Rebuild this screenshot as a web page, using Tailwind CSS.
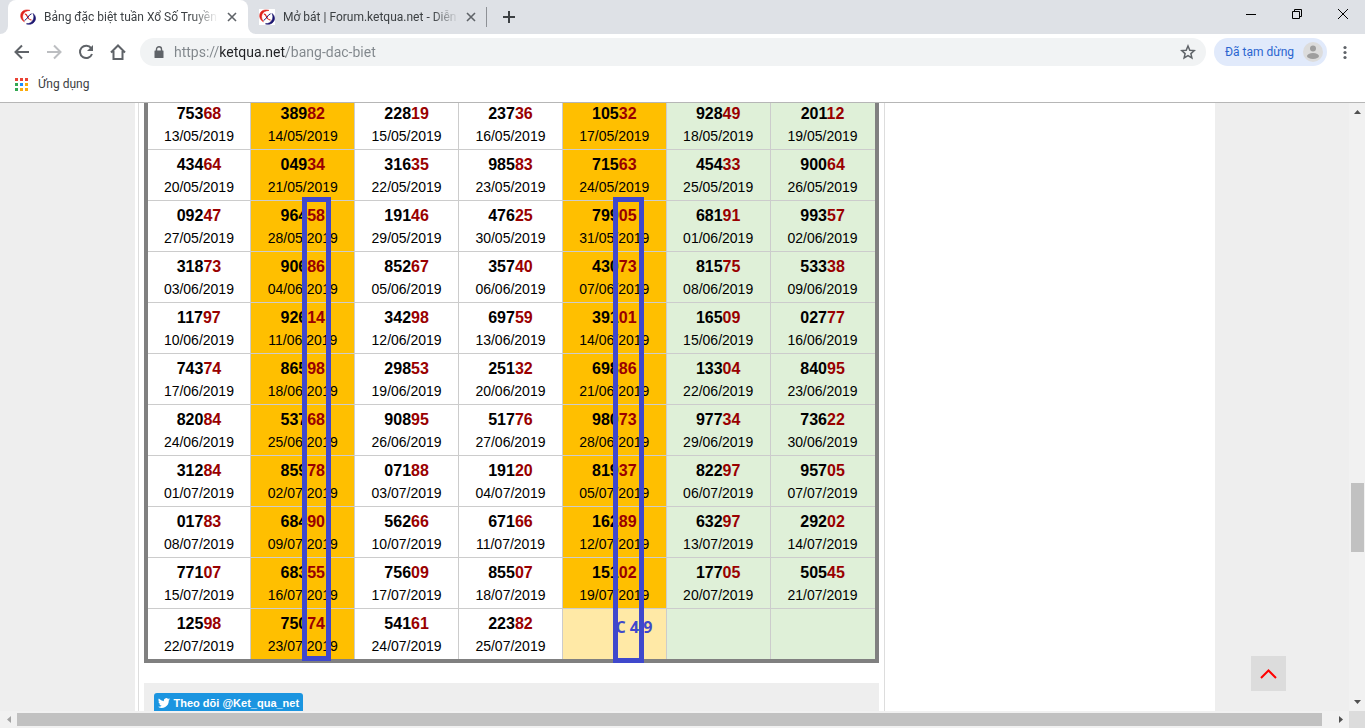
<!DOCTYPE html>
<html lang="vi">
<head>
<meta charset="utf-8">
<meta name="viewport" content="width=device-width, initial-scale=1">
<title>Bảng đặc biệt tuần Xổ Số Truyền Thống</title>
<script src="https://cdn.jsdelivr.net/npm/@tailwindcss/browser@4"></script>
</head>
<body class="flex h-screen flex-col overflow-hidden bg-white font-[Roboto,'Noto_Sans',sans-serif] text-xs text-[#3c4043]">
<svg class="hidden">
  <symbol id="logo" viewBox="0 0 16 16">
    <path d="M10 1.400C6 .2 1.600 1.400.8 5.400C.2 8.600 1.600 11 4.400 12.800C2.800 10.400 2 8 3 5.400C4 2.800 6.800 1.600 10 1.400Z" fill="#e0231c" stroke="#e0231c" stroke-width=".6"/>
    <path d="M13 4.400C16 7 16.400 10.400 14 13.200C12 15.400 9 15.800 6.400 14.800C9.600 14.800 12 13.400 13.200 10.800C14.200 8.600 14 6.400 13 4.400Z" fill="#1c1670" stroke="#1c1670" stroke-width=".6"/>
    <path d="M4.800 5.200Q6.200 4.600 7.400 7.600T11.400 11.200" fill="none" stroke="#e0231c" stroke-width="1.200"/>
    <path d="M11.600 4.800Q9.700 5.200 8 8T4.500 11.400" fill="none" stroke="#1c1670" stroke-width="1"/>
  </symbol>
  <symbol id="close" viewBox="0 0 10 10"><path d="M1 1l8 8M9 1l-8 8" fill="none" stroke="#5f6368" stroke-width="1.600"/></symbol>
</svg>

<header class="shrink-0 border-b border-[#b6b6b6]">
  <div class="flex h-[34px] bg-[#dee1e6]">
    <div class="flex w-2 items-end bg-white"><span class="h-full w-full rounded-br-lg bg-[#dee1e6]"></span></div>
    <div class="flex w-60 items-center rounded-t-lg bg-white pr-2 pl-3">
      <svg class="size-4 shrink-0"><use href="#logo"/></svg>
      <span class="ml-2 w-[174px] whitespace-nowrap [mask-image:linear-gradient(to_right,#000_85%,transparent)]">Bảng đặc biệt tuần Xổ Số Truyền</span>
      <button aria-label="Đóng thẻ" class="ml-1.5 flex size-4 items-center justify-center"><svg class="size-2.5"><use href="#close"/></svg></button>
    </div>
    <div class="flex w-[238px] bg-white">
      <div class="flex flex-1 items-center rounded-bl-lg bg-[#dee1e6] pl-[11px]">
        <span class="size-4 shrink-0 bg-white"><svg class="size-4"><use href="#logo"/></svg></span>
        <span class="ml-2 w-[176px] whitespace-nowrap [mask-image:linear-gradient(to_right,#000_85%,transparent)]">Mở bát | Forum.ketqua.net - Diễn</span>
        <button aria-label="Đóng thẻ" class="ml-1 flex size-4 items-center justify-center"><svg class="size-2.5"><use href="#close"/></svg></button>
      </div>
    </div>
    <div class="my-[7px] w-px self-stretch bg-[#8e9196]"></div>
    <button aria-label="Thẻ mới" class="ml-4 flex items-center"><svg class="size-3" viewBox="0 0 12 12"><path d="M6 0v12M0 6h12" stroke="#3c4043" stroke-width="2"/></svg></button>
    <div class="ml-auto flex text-black">
      <button aria-label="Thu nhỏ" class="flex h-7 w-[46px] items-center justify-center"><svg class="size-[10px]" viewBox="0 0 10 10"><path d="M0 5.500h10" stroke="currentColor"/></svg></button>
      <button aria-label="Khôi phục" class="flex h-7 w-[46px] items-center justify-center"><svg class="size-[10px]" viewBox="0 0 10 10" fill="none" stroke="currentColor"><path d="M.5 2.500h7v7h-7zM2.500 2.500v-2h7v7h-2"/></svg></button>
      <button aria-label="Đóng" class="flex h-7 w-[45px] items-center justify-center"><svg class="size-[10px]" viewBox="0 0 10 10"><path d="M0 0l10 10M10 0L0 10" stroke="currentColor"/></svg></button>
    </div>
  </div>
  <div class="flex h-9 items-center text-[#5f6368]">
    <div class="flex w-[140px] items-center gap-4 pl-3.5">
      <button aria-label="Quay lại"><svg class="size-4" viewBox="0 0 16 16" fill="none" stroke="currentColor" stroke-width="2"><path d="M15 8H2M8 1.500L1.500 8L8 14.500"/></svg></button>
      <button aria-label="Tiến" class="text-[#bcbec1]"><svg class="size-4" viewBox="0 0 16 16" fill="none" stroke="currentColor" stroke-width="2"><path d="M1 8h13M8 1.500L14.500 8L8 14.500"/></svg></button>
      <button aria-label="Tải lại"><svg class="size-4" viewBox="0 0 16 16"><path d="M13.200 4.200A6.200 6.200 0 1 0 14 10" fill="none" stroke="currentColor" stroke-width="2"/><path d="M15 1v6H9z" fill="currentColor"/></svg></button>
      <button aria-label="Trang chủ"><svg class="size-4" viewBox="0 0 16 16" fill="none" stroke="currentColor" stroke-width="2"><path d="M1 8.500L8 1.500L15 8.500M3.500 7v8h9V7"/></svg></button>
    </div>
    <div class="flex h-7 flex-1 items-center rounded-full bg-[#f1f3f4] pr-2.5 pl-3.5">
      <svg class="h-3 w-2.5" viewBox="0 0 10 12"><path d="M1 4.500h8q.5 0 .5.500v6.500q0 .5-.5.500H1q-.5 0-.5-.5V5q0-.5.500-.5z" fill="currentColor"/><path d="M2.500 5V3.200a2.500 2.500 0 0 1 5 0V5" fill="none" stroke="currentColor" stroke-width="1.400"/></svg>
      <input aria-label="Địa chỉ" value="https://ketqua.net/bang-dac-biet" class="ml-2.5 flex-1 bg-[linear-gradient(to_right,#80868b_46px,#202124_46px,#202124_112px,#80868b_112px)] bg-clip-text text-sm text-transparent outline-none">
      <button aria-label="Đánh dấu trang"><svg class="size-4" viewBox="0 0 16 16"><path d="M8 2l1.800 4.200 4.500.4-3.400 3 1 4.400L8 11.700 4.100 14l1-4.400-3.400-3 4.500-.4z" fill="none" stroke="currentColor" stroke-width="1.500"/></svg></button>
    </div>
    <button class="ml-2 flex h-7 items-center rounded-full bg-[#e1eafb] pr-1 pl-[11px] text-[#2a65d0]">
      <span class="w-[78px] text-left whitespace-nowrap">Đã tạm dừng</span>
      <svg class="size-5" viewBox="0 0 20 20"><circle cx="10" cy="10" r="10" fill="#dcdcdc"/><circle cx="10" cy="6.500" r="3" fill="#9e9e9e"/><ellipse cx="10" cy="14" rx="6" ry="3" fill="#9e9e9e"/></svg>
    </button>
    <button aria-label="Trình đơn" class="mr-4 ml-3.5"><svg class="h-4 w-2" viewBox="0 0 8 16" fill="currentColor"><circle cx="4" cy="3.500" r="1.600"/><circle cx="4" cy="8.500" r="1.600"/><circle cx="4" cy="13.500" r="1.600"/></svg></button>
  </div>
  <nav class="flex h-8 items-center pb-1 pl-[15px]">
    <a href="#" class="flex items-center">
      <svg class="size-[13px]" viewBox="0 0 13 13"><path d="M0 0h3v3H0zM5 0h3v3H5zM10 0h3v3h-3z" fill="#ea4335"/><path d="M0 5h3v3H0zM0 10h3v3H0z" fill="#34a853"/><path d="M5 5h3v3H5z" fill="#1a8cff"/><path d="M10 5h3v3h-3zM5 10h3v3H5zM10 10h3v3h-3z" fill="#fbab0c"/></svg>
      <span class="ml-2.5">Ứng dụng</span>
    </a>
  </nav>
</header>

<div class="flex min-h-0 flex-1">
  <main class="relative min-w-0 flex-1 overflow-hidden bg-[#eee] font-['Liberation_Sans',Arial,sans-serif] text-black">
    <div class="mx-auto min-h-full w-full max-w-[1080px] bg-white pl-[3px]">
      <section class="max-w-[747px] border-x border-[#ddd] px-[5px]">
        <div class="relative -mt-1">
          <table class="w-full table-fixed border-separate border-spacing-0 border-x-4 border-b-4 border-[#808080] text-center">
            <tbody id="results"></tbody>
          </table>
          <div class="absolute top-[98px] left-[158px] h-[464px] w-[29px] border-5 border-[#3f48cc]"></div>
          <div class="absolute top-[98px] left-[469px] h-[466px] w-[31px] border-5 border-[#3f48cc]"></div>
          <p class="absolute top-[516px] left-[472px] font-['Open_Sans','Noto_Sans',sans-serif] text-base font-bold whitespace-nowrap text-[#3f48cc]">C 4 9</p>
        </div>
        <div class="mt-5 bg-[#eee] px-2.5 pt-2.5 pb-8">
          <a href="#" class="inline-flex h-5 items-center gap-1 rounded-[3px] bg-[#1b95e0] px-1 text-[11px] font-bold text-white">
            <svg class="h-3 w-3" viewBox="0 0 24 24" fill="currentColor"><path d="M24 4.600a10 10 0 0 1-2.800.8 5 5 0 0 0 2.100-2.700 10 10 0 0 1-3.100 1.200 4.900 4.900 0 0 0-8.400 4.500A14 14 0 0 1 1.700 3.200a4.900 4.900 0 0 0 1.500 6.500 4.900 4.900 0 0 1-2.200-.6 4.900 4.900 0 0 0 3.900 4.900 5 5 0 0 1-2.200.1 4.900 4.900 0 0 0 4.600 3.400A9.900 9.900 0 0 1 0 19.500a14 14 0 0 0 21.500-12.400A10 10 0 0 0 24 4.600z"/></svg>
            Theo dõi @Ket_qua_net
          </a>
        </div>
      </section>
    </div>
    <button aria-label="Lên đầu trang" class="absolute right-[63px] bottom-5 flex size-[35px] items-center justify-center bg-[#dcdcdc]"><svg class="h-[10px] w-[17px]" viewBox="0 0 17 10"><path d="M1 9L8.500 1.500L16 9" fill="none" stroke="#f00" stroke-width="2"/></svg></button>
  </main>
  <div class="flex w-4 flex-col items-center bg-[#f1f1f1] py-1.5">
    <button aria-label="Cuộn lên"><svg class="block h-1.5 w-[7px]" viewBox="0 0 7 6"><path d="M0 5L3.500 1 7 5z" fill="#505050"/></svg></button>
    <div class="flex min-h-0 w-[13px] flex-1 flex-col"><div class="basis-[63%]"></div><div class="h-[69px] shrink-0 bg-[#c1c1c1]"></div></div>
    <button aria-label="Cuộn xuống"><svg class="block h-1.5 w-[7px]" viewBox="0 0 7 6"><path d="M0 1h7L3.500 5z" fill="#505050"/></svg></button>
  </div>
</div>
<div class="flex h-[17px] shrink-0 bg-[#f1f1f1]">
  <button aria-label="Cuộn trái" class="flex w-[17px] items-center justify-center"><svg class="h-[7px] w-1" viewBox="0 0 4 7"><path d="M4 0v7L0 3.500z" fill="#a3a3a3"/></svg></button>
  <div class="my-0.5 flex-1 bg-[#c1c1c1]"></div>
  <div class="flex w-[27px] items-center justify-end pr-1.5"><button aria-label="Cuộn phải"><svg class="block h-[7px] w-1" viewBox="0 0 4 7"><path d="M0 0v7l4-3.500z" fill="#505050"/></svg></button></div>
  <div class="w-4 bg-[#dcdcdc]"></div>
</div>

<script>
  const numbers = [
    "75368 38982 22819 23736 10532 92849 20112",
    "43464 04934 31635 98583 71563 45433 90064",
    "09247 96458 19146 47625 79905 68191 99357",
    "31873 90686 85267 35740 43073 81575 53338",
    "11797 92614 34298 69759 39101 16509 02777",
    "74374 86598 29853 25132 69886 13304 84095",
    "82084 53768 90895 51776 98073 97734 73622",
    "31284 85978 07188 19120 81937 82297 95705",
    "01783 68490 56266 67166 16289 63297 29202",
    "77107 68355 75609 85507 15102 17705 50545",
    "12598 75074 54161 22382"
  ];
  const white = "bg-white", orange = "bg-[#ffbf00]", green = "bg-[#dff0d8]", pale = "bg-[#ffe9a6]";
  const columns = [white, orange, white, white, orange, green, green];
  const date = n => {
    const d = new Date(Date.UTC(2019, 4, 13 + n));
    return [d.getUTCDate(), d.getUTCMonth() + 1].map(v => String(v).padStart(2, "0")).join("/") + "/2019";
  };
  document.getElementById("results").innerHTML = numbers.map((line, r) => {
    const values = line.split(" ");
    return `<tr>${columns.map((bg, c) => {
      const v = values[c];
      const right = c < 6 ? "border-r" : "";
      const bottom = r < numbers.length - 1 ? "border-b" : "";
      const content = v ? `<b class="block text-base leading-[23px]">${v.slice(0, 3)}<span class="text-[#900]">${v.slice(3)}</span></b><span class="block text-sm leading-[23px]">${date(r * 7 + c)}</span>` : "";
      return `<td class="border-[#ccc] px-0 pt-[3px] pb-px ${right} ${bottom} ${!v && c === 4 ? pale : bg}">${content}</td>`;
    }).join("")}</tr>`;
  }).join("");
</script>
</body>
</html>
